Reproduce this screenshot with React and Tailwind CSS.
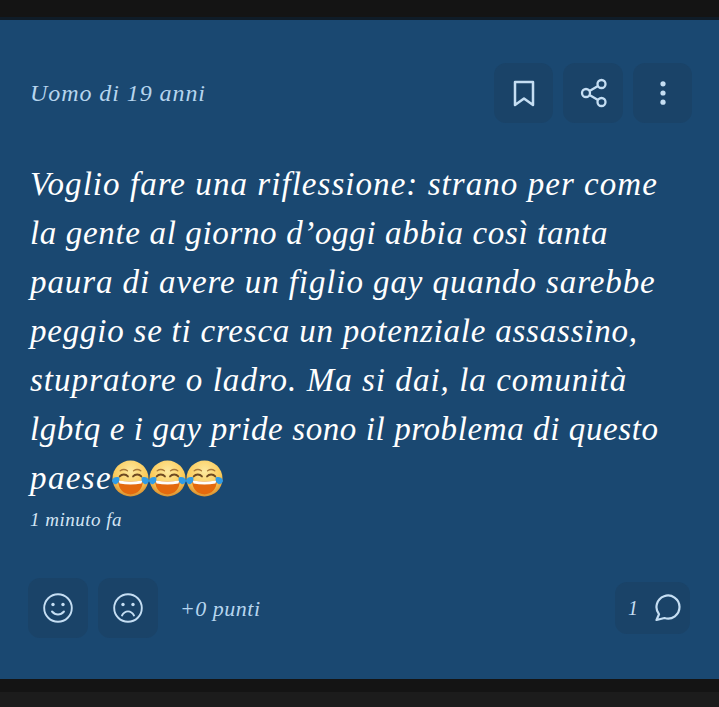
const LINES = [
  { text: 'Voglio fare una riflessione: strano per come', tracking: 'tracking-[1.05px]' },
  { text: 'la gente al giorno d’oggi abbia così tanta', tracking: 'tracking-[0.65px]' },
  { text: 'paura di avere un figlio gay quando sarebbe', tracking: 'tracking-[0.9px]' },
  { text: 'peggio se ti cresca un potenziale assassino,', tracking: 'tracking-[0.78px]' },
  { text: 'stupratore o ladro. Ma si dai, la comunità', tracking: 'tracking-[1.03px]' },
  { text: 'lgbtq e i gay pride sono il problema di questo', tracking: 'tracking-[0.6px]' },
];

const FONT = "font-['Liberation_Serif',cursive] italic";

const LaughEmoji = () => (
  <svg viewBox="0 0 36 36" className="h-[37px] w-[37px] shrink-0">
    <defs>
      <radialGradient id="face" cx="50%" cy="30%" r="70%">
        <stop offset="0%" stopColor="#fce9a0" />
        <stop offset="65%" stopColor="#fbcb5a" />
        <stop offset="100%" stopColor="#d98f2e" />
      </radialGradient>
    </defs>
    <circle cx="18" cy="18" r="17.500" fill="url(#face)" />
    <path d="M8 10.500c2-1.500 5-1.500 7 0M21 10.500c2-1.500 5-1.500 7 0" fill="none" stroke="#a9793a" strokeWidth="1.300" strokeLinecap="round" />
    <path d="M7.500 16c2-2.500 6-2.500 8 0M20.500 16c2-2.500 6-2.500 8 0" fill="none" stroke="#6e4a22" strokeWidth="1.800" strokeLinecap="round" />
    <path d="M6 20c8 1.500 16 1.500 24 0 0 8-5 13.500-12 13.500S6 28 6 20Z" fill="#e4690d" />
    <path d="M6.500 20c7.500 1.500 15.500 1.500 23 0l-.8 2.800c-7 1.300-14.400 1.300-21.400 0Z" fill="#fdfdfb" />
    <path d="M0 20c1-3 4-4 7-3 1 3-1 6-3 6.500-2 .5-4-1.500-4-3.500Z" fill="#2f9be6" />
    <path d="M36 20c-1-3-4-4-7-3-1 3 1 6 3 6.500 2 .5 4-1.500 4-3.500Z" fill="#2f9be6" />
  </svg>
);

const BookmarkIcon = () => (
  <svg viewBox="0 0 22 27" className="h-[27px] w-[22px]" fill="none" stroke="currentColor" strokeWidth="2.500" strokeLinejoin="round">
    <path d="M2 2h18v23l-9-6.500L2 25Z" />
  </svg>
);

const ShareIcon = () => (
  <svg viewBox="0 0 30 30" className="h-[30px] w-[30px]" fill="none" stroke="currentColor" strokeWidth="2.300">
    <circle cx="23.500" cy="6" r="4" />
    <circle cx="8" cy="15" r="4" />
    <circle cx="23.500" cy="24" r="4" />
    <path d="M11.500 13 20 8M11.500 17 20 22" />
  </svg>
);

const DotsIcon = () => (
  <svg viewBox="0 0 24 24" className="h-[24px] w-[24px]" fill="currentColor">
    <circle cx="12" cy="2.800" r="2.600" />
    <circle cx="12" cy="12" r="2.600" />
    <circle cx="12" cy="21.200" r="2.600" />
  </svg>
);

const FaceIcon = ({ mouth }) => (
  <svg viewBox="0 0 34 34" className="h-[34px] w-[34px]" fill="none" stroke="currentColor" strokeWidth="1.900" strokeLinecap="round">
    <circle cx="17" cy="17" r="13.800" />
    <circle cx="12" cy="13.500" r="1.700" fill="currentColor" stroke="none" />
    <circle cx="22" cy="13.500" r="1.700" fill="currentColor" stroke="none" />
    <path d={mouth} />
  </svg>
);

const BubbleIcon = () => (
  <svg viewBox="0 0 28 28" className="h-[28px] w-[28px]" fill="none" stroke="currentColor" strokeWidth="2.200" strokeLinejoin="round">
    <path d="M2.500 26 5 20.200A11.500 11.500 0 1 1 10.500 24Z" />
  </svg>
);

const IconButton = ({ children, className = '' }) => (
  <button type="button" className={`flex h-[60px] items-center justify-center rounded-xl bg-[#1a4368] text-[#c5def3] ${className}`}>
    {children}
  </button>
);

export default function App() {
  return (
    <div className="flex h-[707px] w-[719px] flex-col overflow-hidden bg-[#1c1c1c]">
      <div className="h-[20px] shrink-0 border-b-[3px] border-[#0f1c28] bg-[#141414]" />
      <div className={`flex h-[659px] shrink-0 flex-col bg-[#1a4871] pl-[28px] pr-[27px] pt-[43px] ${FONT}`}>
        <div className="flex items-center justify-between">
          <span className="ml-[2px] text-[24px] tracking-[0.93px] text-[#b6d5ee]">Uomo di 19 anni</span>
          <div className="flex gap-[10px]">
            <IconButton className="w-[59px]"><BookmarkIcon /></IconButton>
            <IconButton className="w-[60px]"><ShareIcon /></IconButton>
            <IconButton className="w-[59px]"><DotsIcon /></IconButton>
          </div>
        </div>

        <div className="ml-[2px] mt-[37px] text-[33px] leading-[49px] text-white">
          {LINES.map((line) => (
            <div key={line.text} className={`whitespace-nowrap ${line.tracking}`}>{line.text}</div>
          ))}
          <div className="flex h-[49px] items-center">
            <span className="tracking-[1.4px]">paese</span>
            <span className="flex">
              <LaughEmoji />
              <LaughEmoji />
              <LaughEmoji />
            </span>
          </div>
        </div>

        <div className="ml-[2px] mt-[5px] text-[19px] leading-[24px] tracking-[0.5px] text-[#d3e5f4]">1 minuto fa</div>

        <div className="mt-[46px] flex items-center">
          <IconButton className="w-[60px]"><FaceIcon mouth="M11 20.500c3.500 4 8.500 4 12 0" /></IconButton>
          <IconButton className="ml-[10px] w-[60px]"><FaceIcon mouth="M11 24.500c3-5.500 9-5.500 12 0" /></IconButton>
          <span className="ml-[22px] text-[22px] tracking-[0.5px] text-[#b6d5ee]">+0 punti</span>
          <button type="button" className="ml-auto mr-[2px] flex h-[52px] w-[75px] items-center justify-between rounded-xl bg-[#1a4368] pl-[13px] pr-[8px] text-[#c5def3]">
            <span className="text-[20px]">1</span>
            <BubbleIcon />
          </button>
        </div>
      </div>
      <div className="h-[13px] shrink-0 bg-[#141414]" />
    </div>
  );
}
